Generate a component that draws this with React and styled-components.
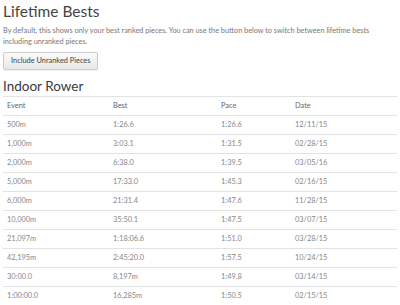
import styled, { createGlobalStyle } from "styled-components";

const GlobalStyle = createGlobalStyle`
  body {
    margin: 0;
    background: #fff;
    font-family: Lato, "Liberation Sans", sans-serif;
    color: #333;
  }
`;

const Page = styled.div`
  padding: 0 3px;
  width: 400px;
  box-sizing: border-box;
`;

const Title = styled.h1`
  margin: 1px 0 0;
  font-size: 15.5px;
  font-weight: 400;
  line-height: 20px;
  color: #444;
`;

const Intro = styled.p`
  margin: 4px 0 0;
  font-size: 7.3px;
  line-height: 11px;
  color: #777;
`;

const ToggleButton = styled.button`
  margin-top: 3px;
  height: 18px;
  padding: 0 7px;
  font-family: inherit;
  font-size: 7.4px;
  color: #444;
  background: linear-gradient(#fafafa, #e8e8e8);
  border: 1px solid #ccc;
  border-radius: 2px;
  box-shadow: 0 1px 1px rgba(0, 0, 0, 0.05);
`;

const Section = styled.h2`
  margin: 8px 0 0;
  font-size: 13.5px;
  font-weight: 400;
  line-height: 16px;
  color: #3a3a3a;
`;

const Table = styled.table`
  margin-top: 2px;
  width: 100%;
  border-collapse: collapse;
  font-size: 7.4px;
`;

const Cell = styled.td`
  height: 18px;
  padding: 0 4px;
  border-top: 1px solid #e3e3e3;
  font-weight: 400;
  color: ${(props) => (props.$head ? "#666" : "#888")};
  text-align: left;
  vertical-align: middle;
`;

const rows = [
  ["500m", "1:26.6", "1:26.6", "12/11/15"],
  ["1,000m", "3:03.1", "1:31.5", "02/28/15"],
  ["2,000m", "6:38.0", "1:39.5", "03/05/16"],
  ["5,000m", "17:33.0", "1:45.3", "02/16/15"],
  ["6,000m", "21:31.4", "1:47.6", "11/28/15"],
  ["10,000m", "35:50.1", "1:47.5", "03/07/15"],
  ["21,097m", "1:18:06.6", "1:51.0", "03/28/15"],
  ["42,195m", "2:45:20.0", "1:57.5", "10/24/15"],
  ["30:00.0", "8,197m", "1:49.8", "03/14/15"],
  ["1:00:00.0", "16,285m", "1:50.5", "02/15/15"],
];

export default function App() {
  return (
    <Page>
      <GlobalStyle />
      <Title>Lifetime Bests</Title>
      <Intro>
        By default, this shows only your best ranked pieces. You can use the
        button below to switch between lifetime bests including unranked
        pieces.
      </Intro>
      <ToggleButton>Include Unranked Pieces</ToggleButton>
      <Section>Indoor Rower</Section>
      <Table>
        <colgroup>
          <col style={{ width: "106px" }} />
          <col style={{ width: "108px" }} />
          <col style={{ width: "74px" }} />
          <col />
        </colgroup>
        <thead>
          <tr>
            <Cell as="th" $head>Event</Cell>
            <Cell as="th" $head>Best</Cell>
            <Cell as="th" $head>Pace</Cell>
            <Cell as="th" $head>Date</Cell>
          </tr>
        </thead>
        <tbody>
          {rows.map((row) => (
            <tr key={row[0]}>
              {row.map((value, i) => (
                <Cell key={i}>{value}</Cell>
              ))}
            </tr>
          ))}
        </tbody>
      </Table>
    </Page>
  );
}
